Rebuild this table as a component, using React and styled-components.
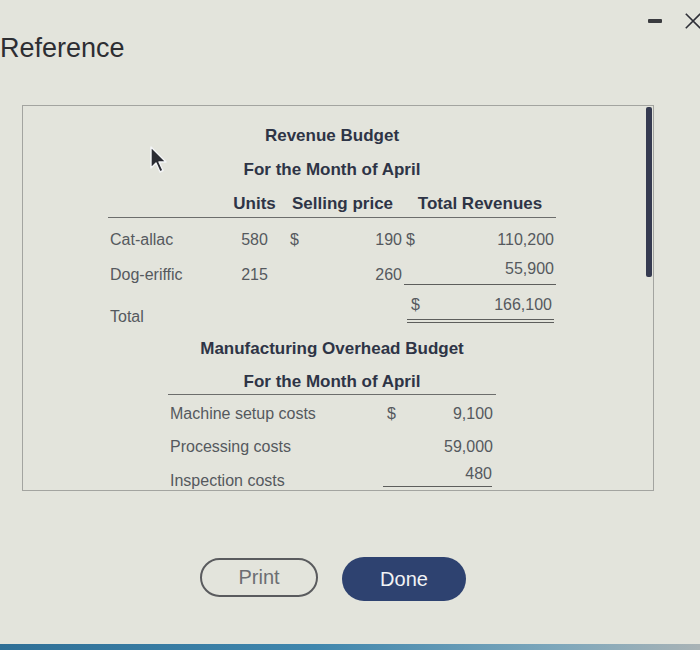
import React from "react";
import styled, { createGlobalStyle } from "styled-components";

const GlobalStyle = createGlobalStyle`
  html, body {
    margin: 0;
    padding: 0;
    background: #e3e4dc;
  }
  body {
    font-family: "Liberation Sans", Arial, sans-serif;
  }
`;

const revenueRows = [
  { name: "Cat-allac", units: "580", priceSign: "$", price: "190", totalSign: "$", total: "110,200" },
  { name: "Dog-eriffic", units: "215", priceSign: "", price: "260", totalSign: "", total: "55,900", underline: true },
];

const overheadRows = [
  { name: "Machine setup costs", sign: "$", amount: "9,100" },
  { name: "Processing costs", sign: "", amount: "59,000" },
];

const App = () => {
  return (
    <>
      <GlobalStyle />
      <Screen>
        <WindowBar>
          <Minimize />
          <CloseIcon viewBox="0 0 20 20">
            <path d="M2 2 L18 18 M18 2 L2 18" />
          </CloseIcon>
        </WindowBar>
        <Heading>Reference</Heading>

        <Panel>
          <ScrollThumb />
          <Cursor viewBox="0 0 18 28">
            <path
              d="M2 1 L2 22 L7 17 L11 26 L14 24.5 L10 16 L17 16 Z"
              fill="#2a2c33"
              stroke="#f4f5f7"
              strokeWidth="1.4"
              strokeLinejoin="round"
            />
          </Cursor>

          <RevenueTable>
            <Title>Revenue Budget</Title>
            <Title>For the Month of April</Title>
            <HeadRow>
              <span />
              <HeadCell>Units</HeadCell>
              <HeadCell>Selling price</HeadCell>
              <HeadCell>Total Revenues</HeadCell>
            </HeadRow>

            {revenueRows.map((r, i) => (
              <RevRow key={r.name} $first={i === 0}>
                <Label>{r.name}</Label>
                <Units>{r.units}</Units>
                <Money $pl={9} $pr={2}>
                  <span>{r.priceSign}</span>
                  <span>{r.price}</span>
                </Money>
                <Money $pl={2} $pr={2} $lift={r.underline}>
                  <span>{r.totalSign}</span>
                  <span>{r.total}</span>
                </Money>
              </RevRow>
            ))}

            <TotalRow>
              <Label $low>Total</Label>
              <span />
              <span />
              <Money $pl={4} $pr={2} $double>
                <span>$</span>
                <span>166,100</span>
              </Money>
            </TotalRow>
          </RevenueTable>

          <OverheadTable>
            <Title>Manufacturing Overhead Budget</Title>
            <SubTitle>For the Month of April</SubTitle>
            {overheadRows.map((r) => (
              <CostRow key={r.name}>
                <Label>{r.name}</Label>
                <Amount>
                  <span>{r.sign}</span>
                  <span>{r.amount}</span>
                </Amount>
              </CostRow>
            ))}
            <CostRow $last>
              <Label $low>Inspection costs</Label>
              <Amount $underline>
                <span />
                <span>480</span>
              </Amount>
            </CostRow>
          </OverheadTable>
        </Panel>

        <Buttons>
          <PrintButton>Print</PrintButton>
          <DoneButton>Done</DoneButton>
        </Buttons>

        <BottomEdge />
      </Screen>
    </>
  );
};

const Screen = styled.div`
  width: 700px;
  height: 650px;
  display: flex;
  flex-direction: column;
  overflow: hidden;
  background: #e3e4dc;
`;

const WindowBar = styled.div`
  height: 30px;
  display: flex;
  align-items: center;
  justify-content: flex-end;
  gap: 22px;
  padding: 6px 0 0;
  margin-right: -2px;
`;

const Minimize = styled.div`
  width: 14px;
  height: 4px;
  background: #3a3b3f;
  border-radius: 1px;
`;

const CloseIcon = styled.svg`
  width: 18px;
  height: 18px;
  stroke: #2f3038;
  stroke-width: 1.8;
  fill: none;
`;

const Heading = styled.h1`
  margin: -3px 0 0 0;
  font-size: 27px;
  line-height: 30px;
  font-weight: 400;
  color: #2d2e33;
`;

const Panel = styled.div`
  position: relative;
  margin: 42px 0 0 22px;
  width: 632px;
  border: 1px solid #a3a4a0;
  padding: 13px 12px 3px 0;
  box-sizing: border-box;
`;

const ScrollThumb = styled.div`
  position: absolute;
  top: 1px;
  right: 1px;
  width: 6px;
  height: 170px;
  background: #353a50;
  border-radius: 2px;
`;

const Cursor = styled.svg`
  position: absolute;
  left: 126px;
  top: 40px;
  width: 18px;
  height: 28px;
`;

const RevenueTable = styled.div`
  width: 448px;
  margin: 0 auto;
`;

const Title = styled.div`
  text-align: center;
  font-size: 17px;
  line-height: 34px;
  font-weight: 700;
  color: #2e3446;
`;

const SubTitle = styled(Title)`
  line-height: 20px;
  padding: 6px 0 2px;
  border-bottom: 1px solid #6c6d6c;
`;

const cols = "120px 53px 123px 152px";

const HeadRow = styled.div`
  display: grid;
  grid-template-columns: ${cols};
  padding: 7px 0 3px;
  border-bottom: 1px solid #6c6d6c;
`;

const HeadCell = styled.div`
  text-align: center;
  font-size: 17px;
  line-height: 20px;
  font-weight: 700;
  color: #2e3446;
  white-space: nowrap;
`;

const RevRow = styled.div`
  display: grid;
  grid-template-columns: ${cols};
  align-items: ${(p) => (p.$first ? "center" : "end")};
  height: ${(p) => (p.$first ? "36px" : "27px")};
  padding-top: ${(p) => (p.$first ? "4px" : "0")};
`;

const TotalRow = styled.div`
  display: grid;
  grid-template-columns: ${cols};
  align-items: end;
`;

const Label = styled.div`
  font-size: 16px;
  line-height: 20px;
  color: #55595e;
  white-space: nowrap;
  padding-left: 2px;
  margin-bottom: ${(p) => (p.$low ? "-4px" : "0")};
`;

const Units = styled.div`
  text-align: center;
  font-size: 16px;
  line-height: 20px;
  color: #55595e;
`;

const Money = styled.div`
  display: flex;
  justify-content: space-between;
  font-size: 16px;
  line-height: 20px;
  color: #55595e;
  padding: 0 ${(p) => p.$pr}px 0 ${(p) => p.$pl}px;
  ${(p) => p.$lift && "padding-bottom: 5px; border-bottom: 1px solid #5d5e5c;"}
  ${(p) => p.$double && "padding-top: 10px; padding-bottom: 4px; border-bottom: 4px double #5d5e5c; margin: 0 2px 0 3px;"}
`;

const OverheadTable = styled.div`
  width: 328px;
  margin: 9px auto 0;
`;

const CostRow = styled.div`
  display: grid;
  grid-template-columns: 212px 116px;
  align-items: ${(p) => (p.$last ? "end" : "center")};
  height: ${(p) => (p.$last ? "auto" : "33px")};
  &:nth-of-type(3) {
    margin-top: 2px;
  }
`;

const Amount = styled.div`
  display: flex;
  justify-content: space-between;
  font-size: 16px;
  line-height: 20px;
  color: #55595e;
  padding: 0 3px 0 7px;
  ${(p) => p.$underline && "margin: 0 4px 0 3px; padding: 1px 0 2px; border-bottom: 1px solid #5d5e5c;"}
`;

const Buttons = styled.div`
  display: flex;
  justify-content: center;
  align-items: flex-start;
  gap: 24px;
  margin: 66px 0 0 -34px;
`;

const PrintButton = styled.button`
  width: 118px;
  height: 39px;
  border: 2px solid #5a5b5e;
  border-radius: 20px;
  background: transparent;
  color: #6c6e72;
  font-family: "Liberation Sans", Arial, sans-serif;
  font-size: 20px;
  margin-top: 1px;
`;

const DoneButton = styled.button`
  width: 124px;
  height: 44px;
  border: none;
  border-radius: 22px;
  background: #2e4270;
  color: #f2f3f5;
  font-family: "Liberation Sans", Arial, sans-serif;
  font-size: 20px;
`;

const BottomEdge = styled.div`
  margin-top: auto;
  height: 6px;
  background: linear-gradient(90deg, #2f6f96 0%, #3f86ad 45%, #7ea7bb 80%, #a9b3b6 100%);
`;

export default App;
